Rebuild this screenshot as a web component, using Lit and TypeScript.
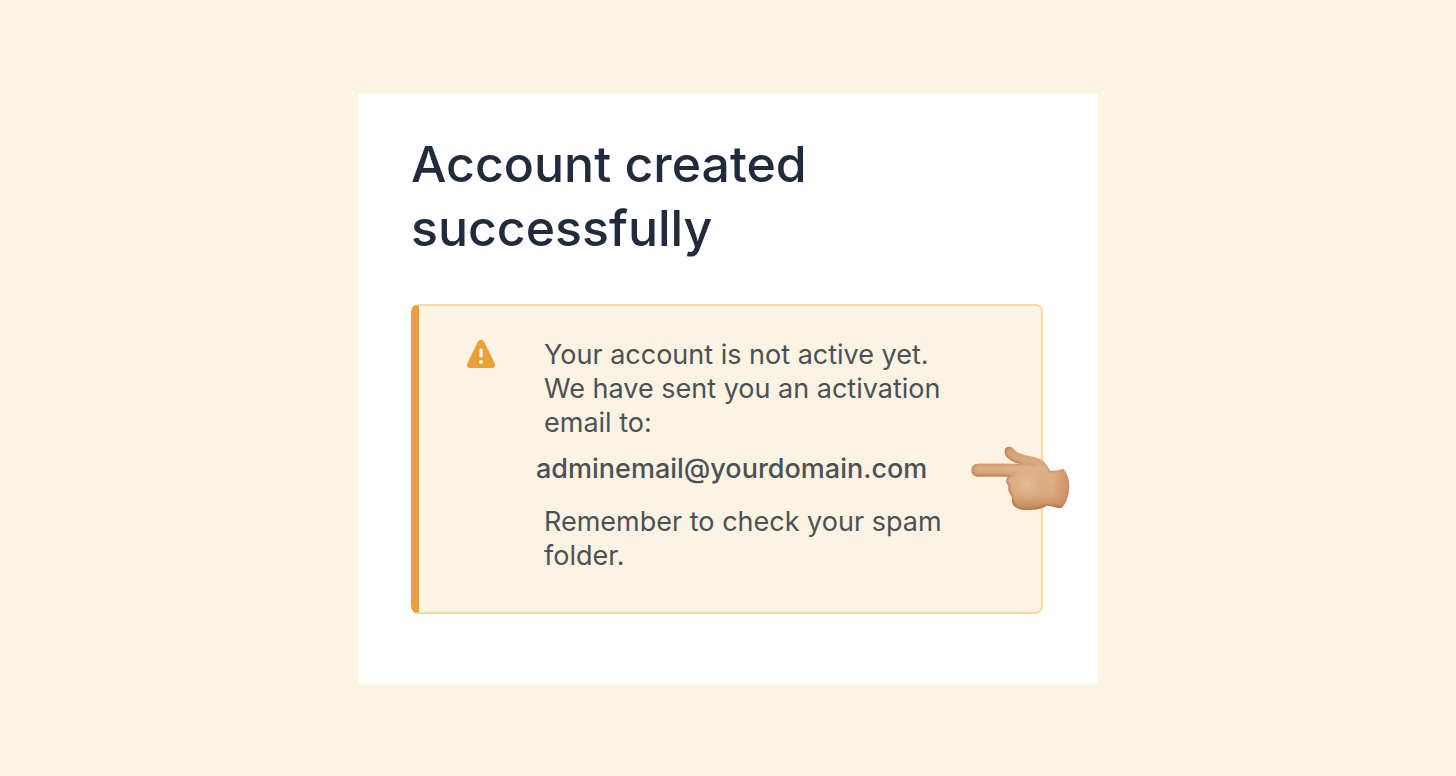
import { LitElement, html, css } from "lit";
import { customElement, property } from "lit/decorators.js";

@customElement("warning-icon")
class WarningIcon extends LitElement {
  static styles = css`
    :host { display: block; }
    svg { display: block; width: 28px; height: 28px; }
  `;
  render() {
    return html`<svg viewBox="0 0 28 28" aria-hidden="true">
      <path fill="#eb9f38" d="M10.8 1.8C12.1-.6 15.8-.6 17.1 1.8L27.6 23.3C28.7 25.7 27.3 28 24.8 28H3.2C.7 28-.7 25.7.4 23.3Z"/>
      <rect x="12.4" y="8.3" width="3.4" height="9.3" rx="1.6" fill="#fdf3e2"/>
      <circle cx="14" cy="22" r="2" fill="#fdf3e2"/>
    </svg>`;
  }
}

@customElement("pointing-hand")
class PointingHand extends LitElement {
  static styles = css`
    :host { display: block; }
    svg { display: block; width: 100px; height: 66px; }
  `;
  render() {
    return html`<svg viewBox="0 0 100 66" aria-hidden="true">
      <defs>
        <linearGradient id="skin" x1="0" y1="0" x2="0" y2="1">
          <stop offset="0" stop-color="#d39b6e"/>
          <stop offset=".35" stop-color="#deb088"/>
          <stop offset=".75" stop-color="#daa87d"/>
          <stop offset="1" stop-color="#c08055"/>
        </linearGradient>
        <linearGradient id="finger" x1="0" y1="0" x2="0" y2="1">
          <stop offset="0" stop-color="#cc9164"/>
          <stop offset=".35" stop-color="#dcb086"/>
          <stop offset=".7" stop-color="#d8a67b"/>
          <stop offset="1" stop-color="#b97850"/>
        </linearGradient>
        <linearGradient id="joint">
          <stop offset=".7" stop-color="#fff"/>
          <stop offset="1" stop-color="#fff" stop-opacity="0"/>
        </linearGradient>
        <mask id="fade"><rect y="17" width="48" height="15" fill="url(#joint)"/></mask>
        <linearGradient id="tip">
          <stop offset="0" stop-color="#b96e49" stop-opacity=".7"/>
          <stop offset="1" stop-color="#d39a6c" stop-opacity="0"/>
        </linearGradient>
        <linearGradient id="wrist">
          <stop offset="0" stop-color="#bd7b50" stop-opacity="0"/>
          <stop offset="1" stop-color="#b46f46" stop-opacity=".5"/>
        </linearGradient>
        <radialGradient id="palm">
          <stop offset="0" stop-color="#e5be98"/>
          <stop offset="1" stop-color="#dfb28a" stop-opacity="0"/>
        </radialGradient>
        <filter id="soft" x="-20%" y="-20%" width="140%" height="140%">
          <feGaussianBlur stdDeviation="1"/>
        </filter>
        <clipPath id="shape">
          <path d="M34.700 6C34.500 2 37 .5 40 .7C43 1 44 3.500 46 5.300C50 8.500 58 9.500 64 11C71 12.500 74.500 15.500 77 20L80.700 25C85 25 89 24 93.500 23C97 27 99.500 34 99.300 41C99 50 96 58 91.500 62C86 62 81.500 60 77 59.500C73 62 68 63.500 62 63.800C56 64.300 50 64 47 62C43 60 42 57 42 54C42 51 41.500 49.500 40.500 48C38 45.500 38.300 42 38.500 39.500C35.500 36.500 35.800 33.500 38 30.500H8C-.7 30.500-.7 17.800 8 17.800H50C46 17.200 42 15.500 39 13C36.500 11 34.800 9 34.700 6Z"/>
        </clipPath>
      </defs>
      <g clip-path="url(#shape)">
        <rect width="100" height="66" fill="url(#skin)"/>
        <rect y="17" width="48" height="14" fill="url(#finger)" mask="url(#fade)"/>
        <rect y="17" width="9" height="14" fill="url(#tip)"/>
        <ellipse cx="57" cy="38" rx="18" ry="16" fill="url(#palm)"/>
        <rect x="82" y="20" width="18" height="43" fill="url(#wrist)"/>
        <g fill="none" stroke="#ae663d" filter="url(#soft)">
          <path stroke-width="2" d="M40 .5C36 0 34 3 34.700 7C36 12 42 15.500 50 17.800" opacity=".85"/>
          <path stroke-width="1.400" d="M50 17.800C55 18.600 60 18 64 18.300" opacity=".35"/>
          <path stroke-width="2" d="M38 30.500C35 34 35.500 37 38.500 39.500C38 45 39 46 41 49C42 55 42 59 46 62C54 66 68 64 77 59.500L92 62"/>
          <path stroke-width="2" d="M74 15L80.700 25L94 22.500" opacity=".6"/>
        </g>
      </g>
    </svg>`;
  }
}

@customElement("app-root")
class AppRoot extends LitElement {
  @property() email = "adminemail@yourdomain.com";

  static styles = css`
    :host {
      display: flex;
      align-items: center;
      justify-content: center;
      min-height: 100vh;
      box-sizing: border-box;
      padding-top: 2px;
      background: #fdf3e2;
      font-family: Inter, "Liberation Sans", sans-serif;
    }
    .card {
      box-sizing: border-box;
      width: 100%;
      max-width: 740px;
      padding: 38px 55px 70px 53px;
      background: #fff;
    }
    h1 {
      margin: 0 0 44px;
      font-size: 50px;
      line-height: 64px;
      font-weight: 500;
      color: #202b3d;
    }
    .alert {
      position: relative;
      display: flex;
      align-items: flex-start;
      gap: 41px;
      padding: 32px 80px 39px 48px;
      border: 2px solid #f8d7a4;
      border-left: 8px solid #eb9f38;
      border-radius: 8px;
      background: #fdf3e2;
    }
    .icon { margin-top: 2px; }
    .message {
      flex: 1;
      min-width: 0;
      font-size: 27px;
      line-height: 34px;
      color: #4b5157;
    }
    p { margin: 0; padding-left: 8px; }
    .email {
      margin: 12px 0 19px;
      padding-left: 0;
      font-weight: 500;
      overflow-wrap: anywhere;
    }
    .hand {
      position: absolute;
      top: 140px;
      right: -29px;
    }
  `;

  render() {
    return html`<main class="card">
      <h1>Account created successfully</h1>
      <section class="alert" role="status">
        <warning-icon class="icon"></warning-icon>
        <div class="message">
          <p>Your account is not active yet. We have sent you an activation email to:</p>
          <p class="email">${this.email}</p>
          <p>Remember to check your spam folder.</p>
        </div>
        <pointing-hand class="hand"></pointing-hand>
      </section>
    </main>`;
  }
}
